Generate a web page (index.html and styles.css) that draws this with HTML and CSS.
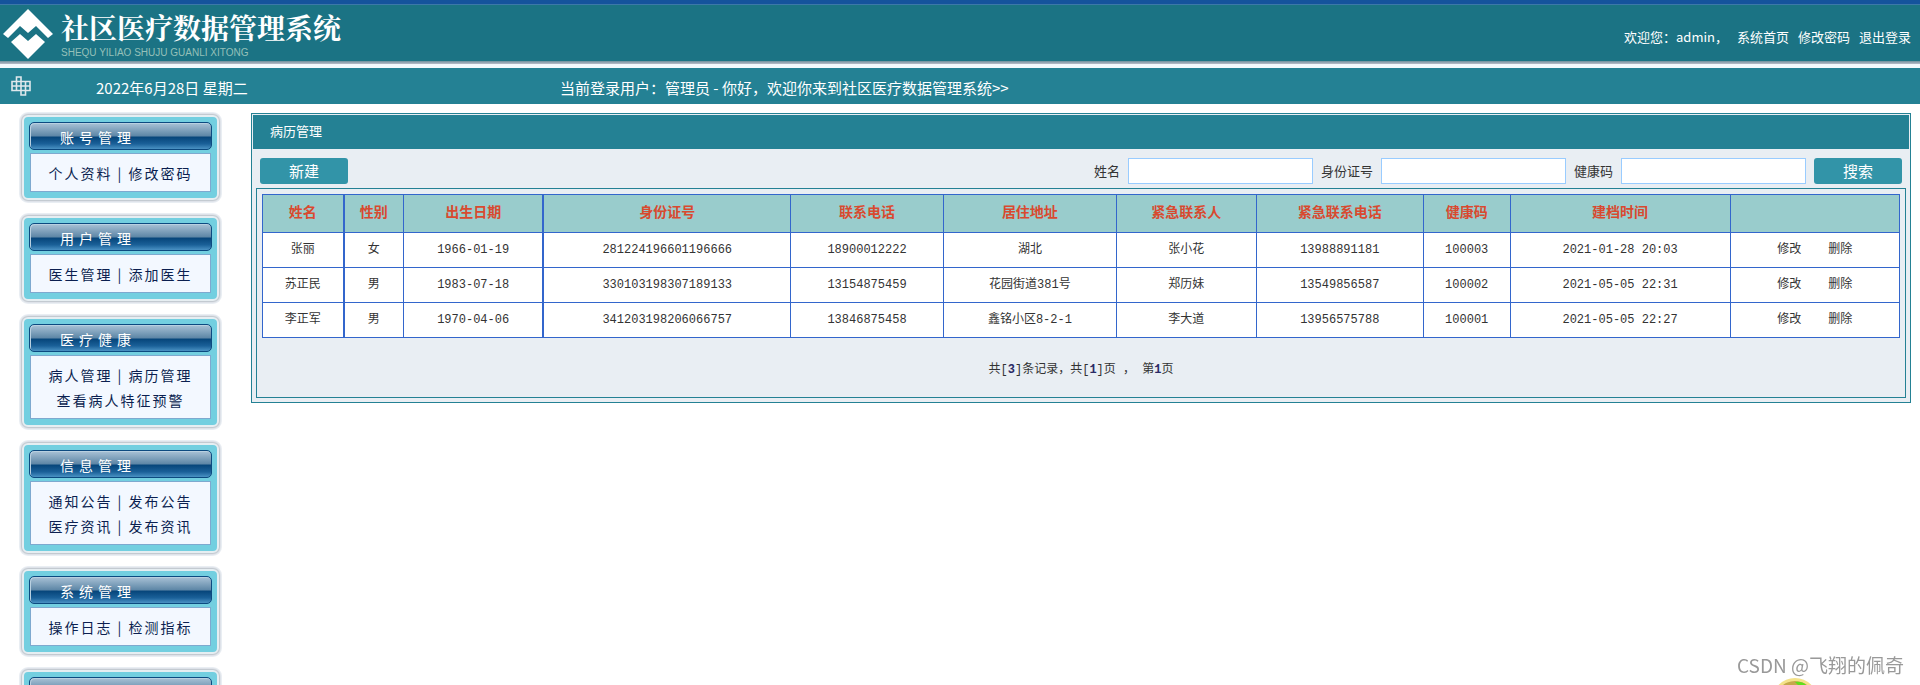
FILE: index.html
```html
<!DOCTYPE html>
<html lang="zh-CN">
<head>
<meta charset="utf-8">
<title>社区医疗数据管理系统</title>
<link rel="stylesheet" href="styles.css">
</head>
<body>
<header class="banner">
  <div class="brand">
    <svg class="brand-mark" viewBox="0 0 50 50" aria-hidden="true">
      <path fill="#fff" d="M25 0 50 25 45 29 33 17 25 24 17 17 5 29 0 25Z"/>
      <path fill="#fff" d="M8 33 17 25 25 32 33 25 42 33 25 50Z"/>
    </svg>
    <div class="brand-text">
      <h1 class="brand-name">社区医疗数据管理系统</h1>
      <p class="brand-sub">SHEQU YILIAO SHUJU GUANLI XITONG</p>
    </div>
  </div>
  <nav class="account">
    <span class="hello">欢迎您：admin，</span>
    <a href="#">系统首页</a>
    <a href="#">修改密码</a>
    <a href="#">退出登录</a>
  </nav>
</header>
<div class="infobar">
  <svg class="cross" viewBox="0 0 20 20" aria-hidden="true">
    <path fill="none" stroke="#dfe8ec" stroke-width="1.6" d="M1 5.500H19V14.500H1ZM5.500 14.500V1H10V14.500M10 14.500V19H14.500V5.500M1 10H19"/>
  </svg>
  <span class="date">2022年6月28日 星期二</span>
  <span class="current">当前登录用户：管理员 - 你好，欢迎你来到社区医疗数据管理系统&gt;&gt;</span>
</div>
<div class="layout">
  <aside class="side">
    <section class="card">
      <h2 class="card-title">账号管理</h2>
      <div class="card-body"><p><a href="#">个人资料</a> | <a href="#">修改密码</a></p></div>
    </section>
    <section class="card">
      <h2 class="card-title">用户管理</h2>
      <div class="card-body"><p><a href="#">医生管理</a> | <a href="#">添加医生</a></p></div>
    </section>
    <section class="card">
      <h2 class="card-title">医疗健康</h2>
      <div class="card-body"><p><a href="#">病人管理</a> | <a href="#">病历管理</a></p><p><a href="#">查看病人特征预警</a></p></div>
    </section>
    <section class="card">
      <h2 class="card-title">信息管理</h2>
      <div class="card-body"><p><a href="#">通知公告</a> | <a href="#">发布公告</a></p><p><a href="#">医疗资讯</a> | <a href="#">发布资讯</a></p></div>
    </section>
    <section class="card">
      <h2 class="card-title">系统管理</h2>
      <div class="card-body"><p><a href="#">操作日志</a> | <a href="#">检测指标</a></p></div>
    </section>
    <section class="card">
      <h2 class="card-title"></h2>
    </section>
  </aside>
  <main class="panel">
    <h2 class="panel-title">病历管理</h2>
    <form class="toolbar">
      <button type="button" class="btn">新建</button>
      <div class="search">
        <label for="name">姓名</label><input id="name" type="text">
        <label for="idno">身份证号</label><input id="idno" type="text">
        <label for="code">健康码</label><input id="code" type="text">
        <button type="button" class="btn">搜索</button>
      </div>
    </form>
    <div class="sheet">
      <table class="records">
        <thead>
          <tr><th class="c-name">姓名</th><th class="c-sex">性别</th><th class="c-birth">出生日期</th><th class="c-id">身份证号</th><th class="c-tel">联系电话</th><th class="c-addr">居住地址</th><th class="c-kin">紧急联系人</th><th class="c-kintel">紧急联系电话</th><th class="c-code">健康码</th><th class="c-time">建档时间</th><th class="c-ops"></th></tr>
        </thead>
        <tbody>
          <tr><td>张丽</td><td>女</td><td>1966-01-19</td><td>281224196601196666</td><td>18900012222</td><td>湖北</td><td>张小花</td><td>13988891181</td><td>100003</td><td>2021-01-28 20:03</td><td><div class="ops"><a href="#">修改</a><a href="#">删除</a></div></td></tr>
          <tr><td>苏正民</td><td>男</td><td>1983-07-18</td><td>330103198307189133</td><td>13154875459</td><td>花园街道381号</td><td>郑历妹</td><td>13549856587</td><td>100002</td><td>2021-05-05 22:31</td><td><div class="ops"><a href="#">修改</a><a href="#">删除</a></div></td></tr>
          <tr><td>李正军</td><td>男</td><td>1970-04-06</td><td>341203198206066757</td><td>13846875458</td><td>鑫铭小区8-2-1</td><td>李大道</td><td>13956575788</td><td>100001</td><td>2021-05-05 22:27</td><td><div class="ops"><a href="#">修改</a><a href="#">删除</a></div></td></tr>
        </tbody>
      </table>
      <p class="pager">共[<b>3</b>]条记录，共[<b>1</b>]页 ， 第<b>1</b>页</p>
    </div>
  </main>
</div>
<svg class="bubble" viewBox="0 0 46 8" aria-hidden="true">
  <circle cx="23" cy="24" r="23" fill="#f4e28a"/>
  <circle cx="23" cy="24" r="20" fill="#c5a94b"/>
  <path fill="#5fe01c" d="M23 5Q30 4 34 8H26Z"/>
</svg>
<div class="watermark">CSDN @飞翔的佩奇</div>
</body>
</html>
```
FILE: styles.css
```css
* { box-sizing: border-box; }
body {
  height: 100vh;
  margin: 0;
  overflow: hidden;
  background: #fff;
  color: #333;
  font: 13px/20px "Noto Sans CJK SC", sans-serif;
}
h1, h2, p { margin: 0; font-weight: normal; }
a { color: inherit; text-decoration: none; }

.banner {
  display: flex;
  justify-content: space-between;
  align-items: flex-start;
  height: 68px;
  padding: 5px 9px 0 3px;
  border-top: 4px solid #15539c;
  border-bottom: 4px solid #f3f8fc;
  background: linear-gradient(#3c78a8 1px, #1b7384 1px, #1b7384 57px, #6f8f9c 57px, #b9bcc8 60px);
  color: #fff;
}
.brand { display: flex; gap: 8px; }
.brand-mark { width: 50px; height: 50px; }
.brand-name {
  font: bold 28px/36px "Noto Serif CJK SC", "Noto Sans CJK SC", serif;
}
.brand-sub {
  padding-top: 2px;
  color: #94c0b9;
  font: 10px/12px "Liberation Sans", sans-serif;
}
.account { display: flex; gap: 9px; padding-top: 18px; }

.infobar {
  display: flex;
  align-items: center;
  height: 36px;
  padding-left: 11px;
  background: #248194;
  color: #fff;
  font-size: 15px;
}
.cross { width: 20px; height: 20px; }
.date { width: 464px; margin-left: 65px; padding-top: 4px; }
.current { padding-top: 4px; }

.layout { display: flex; align-items: flex-start; padding: 9px 9px 0 18px; }
.side {
  display: grid;
  flex: none;
  gap: 12px;
  width: 206px;
  margin-right: 27px;
}
.card {
  padding: 5px 5px 6px;
  margin: 2px 5px 2px 4px;
  border: 2px solid #e6eef2;
  border-radius: 6px;
  background: #73cfe0;
  box-shadow: 0 0 2px 1px #b5bcc4, 0 0 0 3px #edf1f6;
}
.card-title {
  height: 28px;
  padding: 4px 0 0 30px;
  border: 1px solid #0c4a80;
  border-radius: 5px;
  background: linear-gradient(#a9c2d6, #5d86a6 50%, #06457a 54%, #1a6098 80%, #4a92c4);
  box-shadow: inset 1px 1px 0 #b9d0e0;
  color: #fff;
  font-size: 14px;
  line-height: 20px;
  letter-spacing: 5px;
}
.card-body {
  margin: 3px 1px 0;
  padding: 7px 0 5px;
  border: 1px solid #7ea9cf;
  background: #f3f8ff;
  color: #0b1f50;
  font-size: 14px;
  line-height: 25px;
  letter-spacing: 2px;
  text-align: center;
}

.panel {
  flex: 1;
  padding: 1px;
  border: 1px solid #248194;
  background: #e9eef3;
}
.panel-title {
  padding: 6px 17px 8px;
  background: #248194;
  color: #fff;
  font-size: 13px;
}
.toolbar {
  display: flex;
  justify-content: space-between;
  padding: 9px 7px 4px;
}
.btn {
  width: 88px;
  height: 26px;
  padding: 0;
  border: 0;
  border-radius: 3px;
  background: #3294a8;
  color: #fff;
  font: 15px/26px "Noto Sans CJK SC", sans-serif;
}
.search { display: flex; align-items: center; gap: 8px; }
.search input {
  width: 185px;
  height: 26px;
  border: 1px solid #99ccff;
  background: #fff;
}
.sheet {
  margin: 0 3px 3px;
  padding: 5px;
  border: 1px solid #248194;
}
.records, .pager {
  font-family: "Liberation Mono", "Noto Sans CJK SC", monospace;
  font-size: 12px;
  text-align: center;
}
.records {
  width: 100%;
  border-collapse: collapse;
  table-layout: fixed;
  background: #fff;
}
.records th, .records td { height: 35px; padding: 0; border: 1px solid #3366cc; }
.records th {
  height: 38px;
  padding-bottom: 2px;
  background: #99cccc;
  color: #d9492f;
  font-size: 14px;
}
.c-name { width: 4.95%; }
.c-sex { width: 3.66%; }
.c-birth, .c-kin { width: 8.55%; }
.c-id { width: 15.1%; }
.c-tel { width: 9.34%; }
.c-addr { width: 10.56%; }
.c-kintel { width: 10.2%; }
.c-code { width: 5.31%; }
.c-time { width: 13.43%; }
.c-ops { width: 10.35%; }
.records th.c-sex, .records th.c-id,
.records td:nth-child(2), .records td:nth-child(4) { border-left-width: 2px; }
.ops { display: flex; justify-content: center; gap: 27px; }
.pager { padding: 22px 0 12px; }
.pager b { color: #2b2b66; }

.watermark {
  position: fixed;
  right: 16px;
  bottom: 7px;
  color: #999;
  font-size: 19px;
  line-height: 26px;
}
.bubble { position: fixed; right: 102px; bottom: 0; width: 46px; height: 8px; }
```
